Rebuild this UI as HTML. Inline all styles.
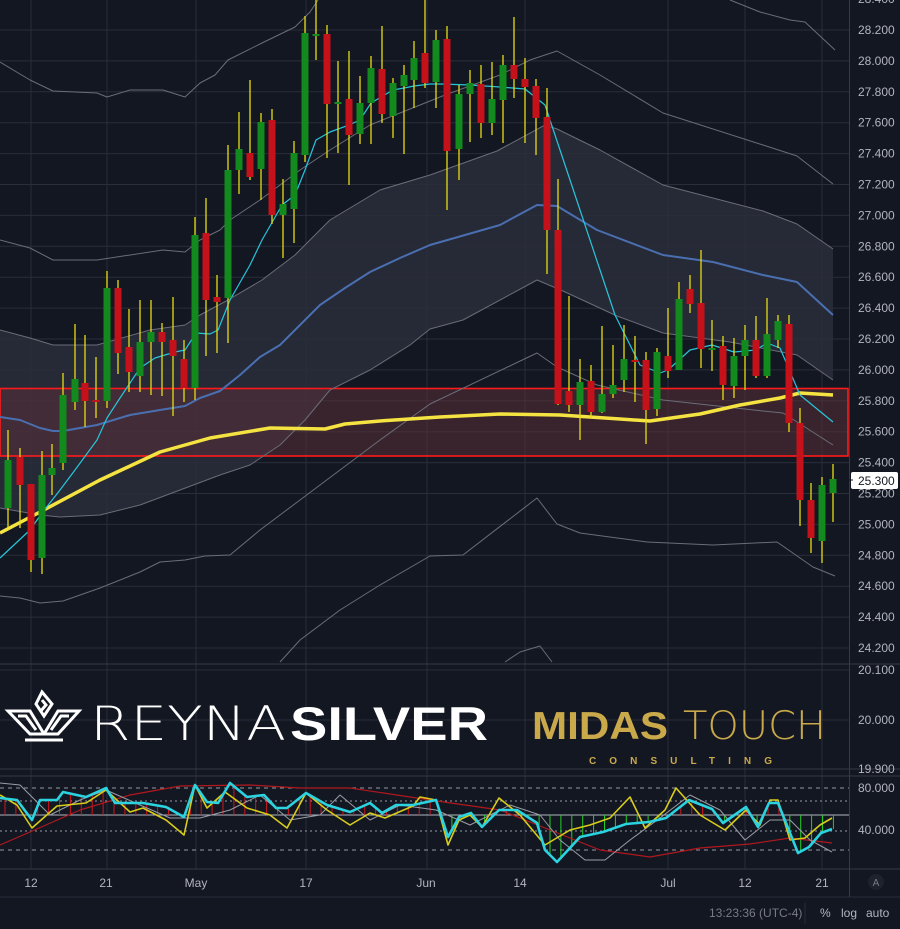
<!DOCTYPE html>
<html><head><meta charset="utf-8"><style>
html,body{margin:0;padding:0;background:#131722;width:900px;height:929px;overflow:hidden}
svg{display:block}
text{font-family:"Liberation Sans",sans-serif}
</style></head><body>
<svg id="s" width="900" height="929" xmlns="http://www.w3.org/2000/svg">
<rect width="900" height="929" fill="#131722"/>
<g id="grid" stroke="#2a2e39" stroke-width="1"></g>
<g id="bands"></g>
<rect x="0" y="388.5" width="848" height="67.5" fill="#5a3038" fill-opacity="0.55" stroke="#ff1a1a" stroke-width="1.6"/>
<g id="lines"></g>
<g id="candles"></g>
<g id="ind"></g>
<line x1="0" y1="664" x2="900" y2="664" stroke="#363a45"/>
<line x1="0" y1="769" x2="900" y2="769" stroke="#363a45"/>
<line x1="0" y1="776" x2="900" y2="776" stroke="#363a45"/>
<line x1="0" y1="869" x2="900" y2="869" stroke="#363a45"/>
<line x1="0" y1="897" x2="900" y2="897" stroke="#2a2e39"/>
<line x1="849.5" y1="0" x2="849.5" y2="897" stroke="#363a45"/>
<g id="axis" fill="#b2b5be" font-size="12"></g>
<rect x="851" y="472" width="47" height="17" fill="#ffffff" rx="2"/>
<line x1="849" y1="480" x2="853" y2="480" stroke="#131722"/>
<text x="858" y="485" font-size="12" fill="#131722">25.300</text>
<text x="858" y="674" font-size="12" fill="#b2b5be">20.100</text>
<text x="858" y="724" font-size="12" fill="#b2b5be">20.000</text>
<text x="858" y="773" font-size="12" fill="#b2b5be">19.900</text>
<text x="858" y="792" font-size="12" fill="#b2b5be">80.000</text>
<text x="858" y="834" font-size="12" fill="#b2b5be">40.000</text>
<g fill="#b2b5be" font-size="12" text-anchor="middle">
<text x="31" y="887">12</text><text x="106" y="887">21</text><text x="196" y="887">May</text>
<text x="306" y="887">17</text><text x="426" y="887">Jun</text><text x="520" y="887">14</text>
<text x="668" y="887">Jul</text><text x="745" y="887">12</text><text x="822" y="887">21</text>
</g>
<circle cx="876" cy="882" r="8" fill="#1e222d"/>
<text x="876" y="886" font-size="10" fill="#787b86" text-anchor="middle">A</text>
<text x="709" y="917" font-size="12" fill="#787b86">13:23:36 (UTC-4)</text>
<line x1="805" y1="903" x2="805" y2="924" stroke="#2a2e39"/>
<text x="820" y="917" font-size="12" fill="#b2b5be">%</text>
<text x="841" y="917" font-size="12" fill="#b2b5be">log</text>
<text x="866" y="917" font-size="12" fill="#b2b5be">auto</text>
<g fill="none" stroke="#ffffff" stroke-width="3" stroke-linejoin="miter">
<polygon points="42,692 52,704 44,716 36,704"/>
<polygon points="8,711 30,711 44,734 30,734"/>
<polygon points="79,711 58,711 44,734 58,734"/>
<polyline points="18,716 26,716 36,730"/>
<polyline points="69,716 61,716 51,730"/>
<polyline points="42,700 46,705 40,712"/>
<line x1="25" y1="740" x2="63" y2="740"/>
</g>
<text x="90" y="740" font-size="47" fill="#ffffff" style="font-family:'DejaVu Sans',sans-serif;font-weight:200" textLength="196" lengthAdjust="spacingAndGlyphs">REYNA</text>
<text x="290" y="740" font-size="47" fill="#ffffff" font-weight="bold" textLength="198" lengthAdjust="spacingAndGlyphs">SILVER</text>
<text x="532" y="739" font-size="39" fill="#c9a94a" font-weight="bold" textLength="136" lengthAdjust="spacingAndGlyphs">MIDAS</text>
<text x="683" y="739" font-size="39" fill="#c9a94a" style="font-family:'DejaVu Sans',sans-serif;font-weight:200" textLength="143" lengthAdjust="spacingAndGlyphs">TOUCH</text>
<text x="589" y="764" font-size="10" fill="#c9a94a" font-weight="bold" textLength="183" lengthAdjust="spacing">CONSULTING</text>
</svg>
<script>
var NS="http://www.w3.org/2000/svg";
function el(p,t,a){var e=document.createElementNS(NS,t);for(var k in a)e.setAttribute(k,a[k]);document.getElementById(p).appendChild(e);return e;}
function pl(p,pts,c,w,extra){var a={points:pts.map(function(q){return q.join(',')}).join(' '),fill:'none',stroke:c,'stroke-width':w,'stroke-linejoin':'round'};if(extra)for(var k in extra)a[k]=extra[k];return el(p,'polyline',a);}
for(var k=0;k<=21;k++){var y=30+30.9*k-30.9;if(y<664)el('grid','line',{x1:0,y1:y,x2:849,y2:y});}
[670,720].forEach(function(y){el('grid','line',{x1:0,y1:y,x2:849,y2:y});});
[31,107,196,306,427,525,668,745,822].forEach(function(x){el('grid','line',{x1:x,y1:0,x2:x,y2:869});});
var labs=["28.400","28.200","28.000","27.800","27.600","27.400","27.200","27.000","26.800","26.600","26.400","26.200","26.000","25.800","25.600","25.400","25.200","25.000","24.800","24.600","24.400","24.200"];
labs.forEach(function(l,i){var y=-0.9+30.9*i;var t=el('axis','text',{x:858,y:y+4});t.textContent=l;});
var C=[[0,330],[30,338],[53,345],[97,345],[150,330],[185,325],[200,315],[228,300],[262,280],[295,255],[330,220],[380,190],[430,175],[497,151],[545,125],[557,129],[600,150],[663,185],[763,211],[797,224],[833,249]];
var D=[[833,380],[797,355],[730,342],[663,333],[617,316],[563,291],[537,280],[463,320],[430,329],[410,345],[370,370],[330,390],[305,420],[280,445],[250,465],[220,475],[180,490],[140,505],[100,515],[60,517],[40,515],[0,508]];
el('bands','polygon',{points:C.concat(D).map(function(q){return q.join(',')}).join(' '),fill:'#2a2d3a','fill-opacity':'0.85'});
var g='#6a6d78';
pl('lines',C,g,1);pl('lines',D.slice().reverse(),g,1);
pl('lines',[[0,62],[30,80],[53,91],[97,93],[107,97],[130,90],[163,90],[185,97],[200,83],[215,75],[228,60],[262,43],[295,27],[310,12],[318,0]],g,1);
pl('lines',[[730,0],[760,12],[790,20],[805,22],[835,50]],g,1);
pl('lines',[[0,240],[30,248],[53,260],[97,260],[163,250],[185,252],[200,240],[220,230],[230,220],[260,200],[300,170],[330,150],[370,125],[420,105],[445,95],[500,75],[530,60],[557,51],[600,75],[663,113],[763,145],[797,156],[833,184]],g,1);
pl('lines',[[0,596],[20,598],[40,603],[63,601],[100,588],[140,572],[160,562],[185,560],[205,556],[230,555],[260,530],[300,500],[340,470],[380,440],[430,404],[537,353],[557,367],[597,385],[663,400],[763,411],[783,413],[833,445]],g,1);
pl('lines',[[280,662],[300,640],[340,610],[380,585],[430,556],[463,555],[537,498],[557,524],[580,533],[647,542],[713,545],[777,542],[813,567],[835,576]],g,1);
pl('lines',[[505,662],[520,652],[540,646],[552,662]],g,1);
pl('lines',[[0,417],[20,420],[40,428],[53,431],[63,431],[97,425],[130,415],[160,410],[185,406],[200,398],[220,391],[240,375],[260,357],[280,345],[300,325],[320,305],[345,288],[370,272],[400,258],[430,245],[500,225],[537,205],[557,206],[597,230],[663,255],[713,262],[763,275],[797,282],[833,315]],'#4a6fb0',2);
pl('lines',[[0,533],[40,512],[100,480],[160,452],[210,438],[270,428],[325,429],[345,424],[380,421],[440,417],[500,414],[560,415],[620,419],[650,421],[700,414],[740,405],[780,398],[800,393],[833,395]],'#f5e342',3.5);
pl('lines',[[0,558],[30,530],[42,513],[60,490],[75,470],[97,440],[107,418],[120,398],[140,368],[155,358],[175,352],[185,350],[196,333],[210,334],[218,330],[230,300],[250,265],[262,240],[282,205],[295,195],[305,170],[316,140],[330,132],[349,125],[360,120],[371,103],[393,90],[404,88],[414,86],[430,84],[440,84],[470,85],[500,87],[525,89],[545,105],[560,150],[580,210],[600,270],[615,315],[640,365],[660,373],[668,370],[690,350],[712,345],[734,352],[756,350],[767,343],[780,348],[800,395],[833,422]],'#26c6da',1.2);
var cd=[[8,'g',460,508,430,528],[20,'r',457,485,448,528],[31,'r',484,560,484,572],[42,'g',475,558,451,574],[52,'g',468,475,444,495],
[63,'g',395,463,373,470],[75,'g',379,402,324,410],[85,'r',383,401,335,427],[96,'r',400,401,357,418],[107,'g',288,401,271,408],[118,'r',288,353,280,374],[129,'r',347,372,309,392],[140,'g',342,376,300,392],[151,'g',332,342,300,395],[162,'r',332,342,323,396],[173,'r',340,356,297,416],[184,'r',359,388,340,402],[195,'g',235,388,217,400],[206,'r',233,300,198,356],[217,'r',297,302,275,353],[228,'g',170,298,145,343],[239,'g',149,170,112,194],[250,'r',153,177,80,180],[261,'g',122,169,113,200],[272,'r',120,215,109,224],[283,'g',204,215,179,258],[294,'g',153,209,141,243],[305,'g',33,155,16,162],[316,'g',34,36,0,60],[327,'r',34,104,25,158],[338,'g',102,104,61,153],[349,'r',99,135,51,185],[360,'g',103,134,76,144],[371,'g',68,103,56,144],[382,'r',69,114,26,123],[393,'g',83,116,78,138],[404,'g',75,86,65,154],[414,'g',58,80,41,108],[425,'r',53,83,0,88],[436,'g',40,82,30,108],[447,'r',39,151,26,210],[459,'g',94,149,85,180],[470,'g',83,94,70,142],[481,'r',84,123,65,138],[492,'g',99,123,62,135],[503,'g',65,100,55,143],[514,'r',65,79,17,98],[525,'r',79,87,58,143],[536,'r',86,118,79,155],[547,'r',117,230,88,274],[558,'r',230,404,179,405],[569,'r',391,405,296,412],[580,'g',382,405,359,440],[591,'r',381,412,365,418],[602,'g',394,412,326,413],[613,'g',385,394,345,398],[624,'g',359,380,325,392],[635,'r',360,362,336,402],[646,'r',360,410,352,444],[657,'g',352,409,348,416],[668,'r',356,371,308,378],[679,'g',299,370,282,368],[690,'r',289,304,275,313],[701,'r',303,349,250,368],[712,'g',348,350,320,371],[723,'r',346,385,336,400],[734,'g',356,386,338,398],[745,'g',340,356,325,390],[756,'r',340,376,316,378],[767,'g',334,376,298,378],[778,'g',321,340,315,348],[789,'r',324,423,315,432],[800,'r',423,500,408,526],[811,'r',500,538,483,553],[822,'g',485,541,477,563],[833,'g',479,493,464,522]];
cd.forEach(function(c){el('candles','line',{x1:c[0],y1:c[4],x2:c[0],y2:c[5],stroke:'#e6dc12','stroke-width':1.3});
el('candles','rect',{x:c[0]-3.5,y:c[2],width:7,height:Math.max(2,c[3]-c[2]),fill:c[1]=='g'?'#138a1e':'#c4111a'});});
[[788,'4,4'],[801,'2,3'],[831,'2,3'],[850,'4,4']].forEach(function(d){el('ind','line',{x1:0,y1:d[0],x2:849,y2:d[0],stroke:'#9598a1','stroke-dasharray':d[1],'stroke-width':1});});
el('ind','line',{x1:0,y1:815,x2:849,y2:815,stroke:'#b2b5be','stroke-width':1});
var cy=[[0,798],[17,800],[32,820],[40,800],[57,800],[63,792],[86,797],[106,788],[115,803],[143,803],[166,807],[184,817],[195,785],[207,802],[218,803],[230,783],[247,797],[264,795],[276,808],[287,808],[306,793],[327,805],[350,812],[370,803],[382,813],[396,805],[413,805],[436,800],[448,837],[459,817],[471,813],[482,827],[499,810],[517,810],[537,823],[545,850],[557,862],[580,837],[603,832],[626,824],[649,822],[666,818],[689,800],[712,809],[723,823],[746,807],[758,827],[769,803],[778,803],[798,853],[809,847],[821,833],[832,829]];
var ye=[[0,795],[17,805],[32,828],[57,806],[86,803],[106,790],[130,812],[143,808],[166,820],[184,835],[195,785],[207,808],[225,792],[247,808],[270,815],[287,828],[306,793],[327,810],[350,825],[370,813],[385,818],[413,806],[420,797],[436,800],[448,845],[459,820],[470,815],[482,827],[499,798],[520,815],[545,845],[570,830],[590,825],[610,818],[630,797],[645,828],[665,810],[676,788],[700,815],[725,830],[746,810],[760,825],[770,800],[778,800],[790,840],[805,838],[820,825],[832,818]];
for(var x=5;x<835;x+=10.9){var i=0;while(i<cy.length-1&&cy[i+1][0]<x)i++;var a=cy[i],b=cy[Math.min(i+1,cy.length-1)];var t=b[0]==a[0]?0:(x-a[0])/(b[0]-a[0]);var yv=a[1]+(b[1]-a[1])*t;
el('ind','line',{x1:x,y1:815,x2:x,y2:yv,stroke:(yv<815?'#d0161e':'#22d022'),'stroke-width':1});}
pl('ind',[[0,845],[30,832],[80,810],[130,795],[180,786],[250,785],[300,788],[350,788],[430,800],[500,810],[550,830],[600,850],[650,857],[700,848],[750,844],[790,838],[832,843]],'#b0181e',1.2);
pl('ind',[[0,783],[20,785],[50,815],[80,800],[106,790],[140,805],[170,818],[200,818],[230,810],[260,795],[290,820],[320,815],[340,795],[370,820],[400,805],[436,810],[470,825],[510,805],[540,815],[560,840],[585,860],[605,860],[630,840],[660,818],[690,795],[720,810],[745,840],[770,820],[790,820],[810,840],[832,852]],'#9a9ca5',1);
pl('ind',ye,'#d8cc1a',1.6);
pl('ind',cy,'#2ad3df',2.6);
</script>
</body></html>
